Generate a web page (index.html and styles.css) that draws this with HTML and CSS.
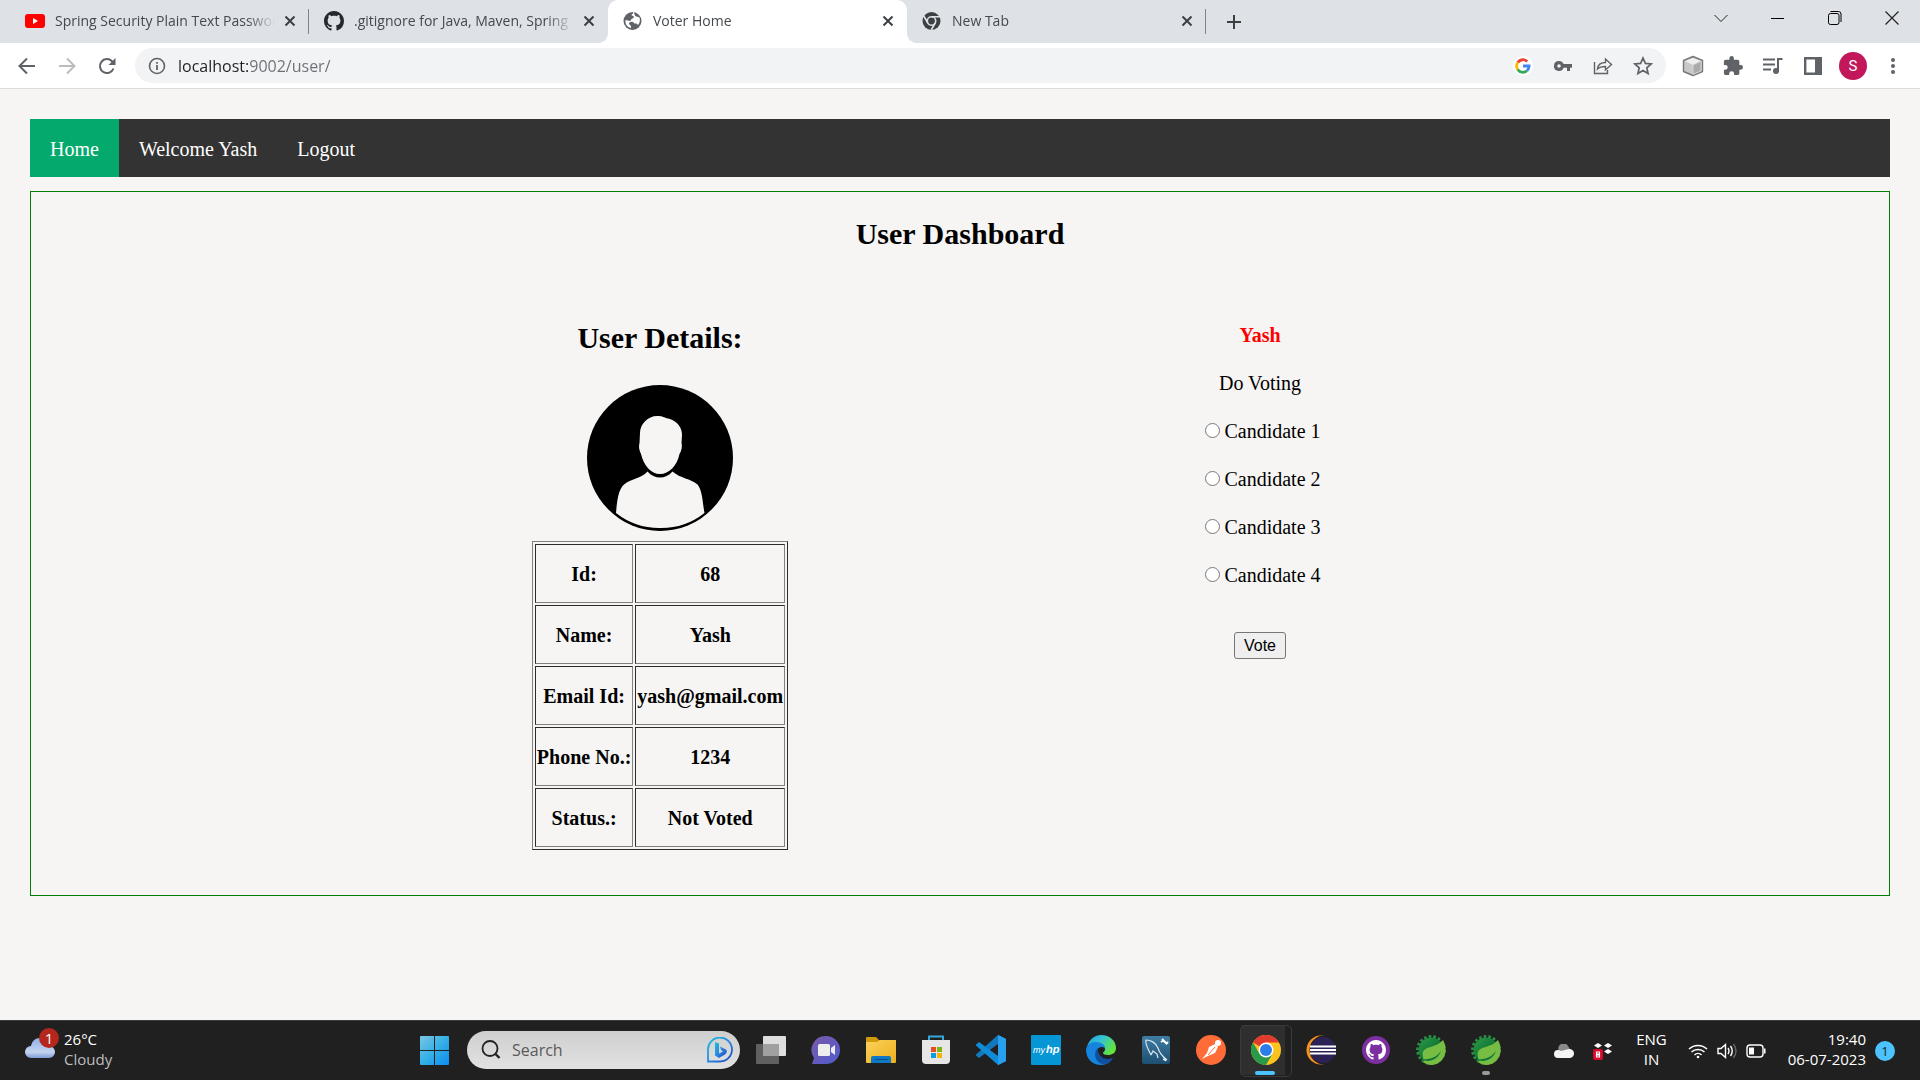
FILE: index.html
```html
<!DOCTYPE html>
<html lang="en">
<head>
<meta charset="utf-8">
<title>Voter Home</title>
<link rel="stylesheet" href="styles.css">
</head>
<body>
<svg class="defs" width="0" height="0" aria-hidden="true">
  <defs>
    <symbol id="close" viewBox="0 0 12 12"><path d="M1.5 1.5l9 9M10.5 1.5l-9 9" stroke="#3c4043" stroke-width="2" fill="none"/></symbol>
    <symbol id="octocat" viewBox="0 0 16 16"><path fill-rule="evenodd" d="M8 0C3.58 0 0 3.58 0 8c0 3.54 2.29 6.53 5.47 7.59.4.07.55-.17.55-.38 0-.19-.01-.82-.01-1.49-2.01.37-2.53-.49-2.69-.94-.09-.23-.48-.94-.82-1.13-.28-.15-.68-.52-.01-.53.63-.01 1.08.58 1.23.82.72 1.21 1.87.87 2.33.66.07-.52.28-.87.51-1.07-1.78-.2-3.64-.89-3.64-3.95 0-.87.31-1.59.82-2.15-.08-.2-.36-1.02.08-2.12 0 0 .67-.21 2.2.82.64-.18 1.32-.27 2-.27s1.36.09 2 .27c1.53-1.04 2.2-.82 2.2-.82.44 1.1.16 1.92.08 2.12.51.56.82 1.27.82 2.15 0 3.07-1.87 3.75-3.65 3.95.29.25.54.73.54 1.48 0 1.07-.01 1.93-.01 2.2 0 .21.15.46.55.38A8.01 8.01 0 0 0 16 8c0-4.42-3.58-8-8-8z"/></symbol>
    <linearGradient id="leafBack" x1="0" y1="0" x2="1" y2="1"><stop offset="0" stop-color="#2e9a47"/><stop offset=".5" stop-color="#137a38"/><stop offset="1" stop-color="#6db33f"/></linearGradient>
    <symbol id="spring" viewBox="0 0 30 30">
      <circle cx="15" cy="15" r="12.5" fill="url(#leafBack)"/>
      <circle cx="15" cy="15" r="13.6" fill="none" stroke="#2a9144" stroke-width="2.6" stroke-dasharray="2.6 2.1" pathLength="84.6"/>
      <path d="M7 22C4 10 20 14 27 5c3 5 4 13 0 18.500C23 30 14 32 7.500 27.500L9 25z" fill="#77bd43"/>
      <path d="M4 24c8 1 17-1 22-10-3 14-14 15-22 10z" fill="#11753a"/>
      <path d="M7 22c7 1 14-1 19-9l1 9c-4 8-12 9-19 5z" fill="#77bd43"/>
      <path d="M4 24c9 1 16-1 21-8-4 10-13 12-21 8z" fill="#11753a"/>
    </symbol>
  </defs>
</svg>

<header class="browser">
  <div class="tabstrip">
    <div class="tabs">
      <div class="tab">
        <svg class="favicon" viewBox="0 0 20 20"><rect y="3" width="20" height="14" rx="3" fill="#f00"/><path d="M8 7l5 3-5 3z" fill="#fff"/></svg>
        <span class="tab-title">Spring Security Plain Text Password</span>
        <button class="tab-close" aria-label="Close tab"><svg width="12" height="12"><use href="#close"/></svg></button>
      </div>
      <div class="tab">
        <svg class="favicon" viewBox="0 0 20 20" fill="#24292f"><use href="#octocat"/></svg>
        <span class="tab-title">.gitignore for Java, Maven, Spring</span>
        <button class="tab-close" aria-label="Close tab"><svg width="12" height="12"><use href="#close"/></svg></button>
      </div>
      <div class="tab active">
        <svg class="favicon" viewBox="0 0 20 20"><circle cx="9.500" cy="10" r="9" fill="#5f6368"/><path d="M10 2.500c-2 1-2 2 0 2.500 1.500.5 1 2-.5 2.500-2 .5-1 2-2.500 2.500l-4.500-1C2 13 4 16 8 17v-2l-2-2c0-2 2-2.500 4-2l1.500 1.500h2l1.500 1.500c2-2 2.300-5 1.500-7.500l-3-1c-2 0-1.500-3-3.500-5z" fill="#fff"/></svg>
        <span class="tab-title">Voter Home</span>
        <button class="tab-close" aria-label="Close tab"><svg width="12" height="12"><use href="#close"/></svg></button>
      </div>
      <div class="tab">
        <svg class="favicon" viewBox="0 0 20 20"><circle cx="9.500" cy="10" r="9" fill="#3c4043"/><circle cx="9.500" cy="10" r="4.200" fill="none" stroke="#dee1e6" stroke-width="1.600"/><path d="M9.500 5.800H18M5.800 12L1.800 5M13.200 12l-4 7" stroke="#dee1e6" stroke-width="1.600"/></svg>
        <span class="tab-title">New Tab</span>
        <button class="tab-close" aria-label="Close tab"><svg width="12" height="12"><use href="#close"/></svg></button>
      </div>
    </div>
    <button class="new-tab" aria-label="New tab"><svg width="16" height="16"><path d="M8 1v14M1 8h14" stroke="#3c4043" stroke-width="2"/></svg></button>
    <div class="window-controls">
      <button aria-label="Search tabs"><svg width="14" height="14"><path d="M.5 4L7 10.500 13.500 4" fill="none" stroke="#222"/></svg></button>
      <button aria-label="Minimize"><svg width="14" height="14"><path d="M0 7.500h13" stroke="#000"/></svg></button>
      <button aria-label="Restore"><svg width="14" height="14" fill="none" stroke="#000"><rect x=".5" y="2.500" width="10.500" height="11" rx="2"/><path d="M2.500.5h8q2.500 0 2.500 2.500v8"/></svg></button>
      <button aria-label="Close"><svg width="14" height="14"><path d="M.5.5l13 13M13.500.5l-13 13" stroke="#222" stroke-width="1.200"/></svg></button>
    </div>
  </div>
  <div class="toolbar">
    <button class="tool" aria-label="Back"><svg width="18" height="18" fill="none" stroke="#5f6368" stroke-width="2"><path d="M17 9H2M9 1.500L1.500 9 9 16.500"/></svg></button>
    <button class="tool" aria-label="Forward"><svg width="18" height="18" fill="none" stroke="#babcbe" stroke-width="2"><path d="M1 9h15M9 1.500L16.500 9 9 16.500"/></svg></button>
    <button class="tool" aria-label="Reload"><svg width="18" height="18"><path d="M15.500 11.500A7 7 0 1 1 14 4.200L16 6.500" fill="none" stroke="#5f6368" stroke-width="2"/><path d="M17.500 1v7h-7z" fill="#5f6368"/></svg></button>
    <div class="omnibox">
      <svg class="info" width="18" height="18"><circle cx="9" cy="9" r="7.500" fill="none" stroke="#5f6368" stroke-width="1.600"/><path d="M9 8v5M9 5v1.800" stroke="#5f6368" stroke-width="1.800"/></svg>
      <input class="url" type="text" value="localhost:9002/user/" aria-label="Address">
      <button class="tool" aria-label="Google"><svg width="20" height="20"><circle cx="10" cy="10" r="10" fill="#fff"/><g fill="none" stroke-width="2.800"><path d="M4.700 6.500A6.300 6.300 0 0 1 14.300 5.500" stroke="#ea4335"/><path d="M4.700 6.500a6.300 6.300 0 0 0 0 7" stroke="#fbbc05"/><path d="M4.700 13.500a6.300 6.300 0 0 0 9.300 1.300" stroke="#34a853"/><path d="M14 14.800A6.300 6.300 0 0 0 16.100 10H10" stroke="#4285f4"/></g></svg></button>
      <button class="tool" aria-label="Passwords"><svg width="18" height="18"><path fill="#5f6368" fill-rule="evenodd" d="M5 4a5 5 0 1 0 4.600 6.800H13V14h3v-3.200h2V7H9.600A5 5 0 0 0 5 4zm0 3.200a1.800 1.800 0 1 1 0 3.600 1.800 1.800 0 0 1 0-3.600z"/></svg></button>
      <button class="tool" aria-label="Share"><svg width="20" height="20" fill="none" stroke="#5f6368" stroke-width="1.400"><path d="M1.500 6v11.500h13V14M4.500 13C5 8 8 6.500 12.500 6.500V3l6 5.500-6 5.500v-3.500c-4 0-6 .5-8 2.500z"/></svg></button>
      <button class="tool" aria-label="Bookmark"><svg width="20" height="20"><path d="M10 2l2.400 5.400 5.800.5-4.400 3.900 1.300 5.700L10 14.500l-5.100 3 1.300-5.700L1.800 7.900l5.800-.5z" fill="none" stroke="#5f6368" stroke-width="1.700"/></svg></button>
    </div>
    <button class="tool" aria-label="Extension"><svg width="22" height="22" stroke="#777" stroke-width="1.400" stroke-linejoin="round"><path d="M11 1.500l9.500 4v11L11 20.500l-9.500-4v-11z" fill="#c8c8c8"/><path d="M3 6l8-3 8 3-8 4z" fill="#eee" stroke="none"/><path d="M11 10l8-4v10l-8 3.500z" fill="#ababab" stroke="#ddd" stroke-width=".8"/></svg></button>
    <button class="tool" aria-label="Extensions"><svg width="20" height="20" viewBox="1 1 22 22"><path fill="#5f6368" d="M20.500 11H19V7c0-1.100-.9-2-2-2h-4V3.500a2.500 2.500 0 0 0-5 0V5H4c-1.100 0-2 .9-2 2v3.800h1.500a2.700 2.700 0 0 1 0 5.400H2V20c0 1.100.9 2 2 2h3.800v-1.500a2.700 2.700 0 0 1 5.400 0V22H17c1.100 0 2-.9 2-2v-4h1.500a2.500 2.500 0 0 0 0-5z"/></svg></button>
    <button class="tool" aria-label="Media"><svg width="20" height="20"><path d="M0 3.500h12M0 8.500h12M0 13.500h8M15 16V3h4.500" fill="none" stroke="#5f6368" stroke-width="2"/><circle cx="13" cy="15" r="3" fill="#5f6368"/></svg></button>
    <button class="tool" aria-label="Side panel"><svg width="18" height="18"><path d="M1.200 1.200h15.600v15.600H1.200z" fill="none" stroke="#5f6368" stroke-width="2.400"/><path d="M11 1h6v16h-6z" fill="#5f6368"/></svg></button>
    <button class="tool" aria-label="Profile"><span class="avatar">S</span></button>
    <button class="tool" aria-label="Menu"><svg width="4" height="18" fill="#5f6368"><circle cx="2" cy="3" r="2"/><circle cx="2" cy="9" r="2"/><circle cx="2" cy="15" r="2"/></svg></button>
  </div>
</header>

<main class="page">
  <nav class="navbar">
    <a class="current" href="#home">Home</a>
    <a href="#welcome">Welcome Yash</a>
    <a href="#logout">Logout</a>
  </nav>
  <section class="dashboard">
    <h2>User Dashboard</h2>
    <div class="columns">
      <div class="details">
        <h2>User Details:</h2>
        <svg class="portrait" width="146" height="146" viewBox="0 0 146 146">
          <circle cx="73" cy="73" r="73"/>
          <path fill="#f6f5f4" d="M70 31c5-.500 8 2 13 3 8 3 12 9 12 16l-.5 8c1 3 0 8-2 11C90 81 82 89 73 89S57 81 54 69c-2-4-2.500-8-1.500-11L53 48c0-9 8-17 17-17z"/>
          <path fill="#f6f5f4" d="M60.500 86.500c7 8 18 8 25 0 8 7 18 7 25 13 5 6 5 18 7 28.500A70 70 0 0 1 73 143a70 70 0 0 1-44-15c1-11 2-23 8-28.500 7-6 17-5.500 23.500-13z"/>
        </svg>
        <table class="facts">
          <tr><th scope="row">Id:</th><td>68</td></tr>
          <tr><th scope="row">Name:</th><td>Yash</td></tr>
          <tr><th scope="row">Email Id:</th><td>yash@gmail.com</td></tr>
          <tr><th scope="row">Phone No.:</th><td>1234</td></tr>
          <tr><th scope="row">Status.:</th><td>Not Voted</td></tr>
        </table>
      </div>
      <form class="ballot">
        <h4>Yash</h4>
        <p>Do Voting</p>
        <label><input type="radio" name="candidate">Candidate 1</label>
        <label><input type="radio" name="candidate">Candidate 2</label>
        <label><input type="radio" name="candidate">Candidate 3</label>
        <label><input type="radio" name="candidate">Candidate 4</label>
        <button type="button" class="vote">Vote</button>
      </form>
    </div>
  </section>
</main>

<footer class="taskbar">
  <div class="weather">
    <div class="cloud">
      <svg width="30" height="20"><defs><linearGradient id="cl" x1="0" y1="0" x2="0" y2="1"><stop offset="0" stop-color="#8fb0ea"/><stop offset=".7" stop-color="#c4d3ee"/><stop offset="1" stop-color="#7f9bd6"/></linearGradient></defs><path d="M6 20a6 6 0 0 1 0-12C7 3 10 0 15 0s8 3 9 8a6 6 0 0 1 0 12z" fill="url(#cl)"/></svg>
      <span class="alert">1</span>
    </div>
    <div class="reading"><span>26°C</span><span class="sky">Cloudy</span></div>
  </div>
  <div class="apps">
    <button class="app" aria-label="Start"><svg width="29" height="29"><defs><linearGradient id="win" x1="0" y1="0" x2="1" y2="1" gradientUnits="objectBoundingBox"><stop offset="0" stop-color="#7cc5e3"/><stop offset=".5" stop-color="#35b0e6"/><stop offset="1" stop-color="#0a8cf0"/></linearGradient></defs><path d="M0 1q0-1 1-1h13v14H0zM15 0h13q1 0 1 1v13H15zM0 15h14v14H1q-1 0-1-1zM15 15h14v13q0 1-1 1H15z" fill="url(#win)"/></svg></button>
    <div class="search">
      <svg width="20" height="20" fill="none" stroke="#222"><circle cx="9" cy="8.500" r="7.500" stroke-width="1.800"/><path d="M14 13.500l4.500 4.500" stroke-width="2.400"/></svg>
      <input type="text" placeholder="Search" aria-label="Search">
      <svg width="26" height="26"><defs><linearGradient id="bing" x1="0" y1="0" x2="1" y2="1"><stop offset="0" stop-color="#19c3d6"/><stop offset=".5" stop-color="#2a86e0"/><stop offset="1" stop-color="#1b49c4"/></linearGradient></defs><path d="M1 24.500V13A12 12 0 1 1 13 24.500z" fill="none" stroke="url(#bing)" stroke-width="1.800"/><path d="M8 5l4 1.500v10l4-2-2-1.500-1-3.500 6 3c1.500 1.500.5 4-1 5l-6 3.500-4-2.500z" fill="url(#bing)"/></svg>
    </div>
    <button class="app" aria-label="Task view"><svg width="30" height="28"><rect x="7" width="23" height="20" rx="1" fill="#dedede"/><rect y="8" width="23" height="20" rx="1" fill="#606060"/><path d="M7 8h16v12H7z" fill="#a0a0a0"/></svg></button>
    <button class="app" aria-label="Chat"><svg width="30" height="30"><defs><linearGradient id="chat" x1="0" y1="0" x2="1" y2="1"><stop offset="0" stop-color="#7b5aa8"/><stop offset="1" stop-color="#4e5bd0"/></linearGradient></defs><path d="M15 1a14 14 0 1 1 0 28H1l2-6A14 14 0 0 1 15 1z" fill="url(#chat)"/><rect x="7" y="9" width="12" height="12" rx="1.500" fill="#eee"/><path d="M20 13l4-3v10l-4-3z" fill="#eee"/></svg></button>
    <button class="app" aria-label="File Explorer"><svg width="30" height="28"><defs><linearGradient id="fold" x1="0" y1="0" x2="1" y2="1"><stop offset="0" stop-color="#fbd15b"/><stop offset="1" stop-color="#edb01c"/></linearGradient></defs><path d="M0 2q0-1 1-1h9l3 3h2v6H0z" fill="#d19a0a"/><path d="M0 6h11l3-2h16v22q0 1-1 1H1q-1 0-1-1z" fill="url(#fold)"/><path d="M5 27v-5q0-2 2-2h16q2 0 2 2v5z" fill="#0f78c5"/><path d="M9 23.500h13" stroke="#084f8c"/></svg></button>
    <button class="app" aria-label="Microsoft Store"><svg width="30" height="30"><path d="M8 7V1.500h14V7" fill="none" stroke="#35a5dc" stroke-width="2"/><path d="M1 5h28v20q0 4-4 4H5q-4 0-4-4z" fill="#e6e6e6"/><path d="M10 12h5v5h-5z" fill="#e94f24"/><path d="M16 12h5v5h-5z" fill="#7fb607"/><path d="M10 18h5v5h-5z" fill="#089ee4"/><path d="M16 18h5v5h-5z" fill="#f5b406"/></svg></button>
    <button class="app" aria-label="Visual Studio Code"><svg width="30" height="30"><path d="M22 0l8 4v22l-8 4z" fill="#26a0ef"/><path d="M22 0v9L3 23l-3-2.500v-1z" fill="#1278be"/><path d="M22 30v-9L3 7 0 9.500v1z" fill="#0f8bd8"/><path d="M22 0v30l8-4V4z" fill="#26a0ef"/></svg></button>
    <button class="app" aria-label="myHP"><svg width="30" height="30"><rect width="30" height="30" rx="1" fill="#0596d5"/><text class="hp" x="2" y="18">my</text><text class="hp bold" x="15" y="18">hp</text></svg></button>
    <button class="app" aria-label="Edge"><svg width="30" height="30"><defs><linearGradient id="e1" x1="0" y1="0" x2="1" y2=".5"><stop offset="0" stop-color="#1f9be0"/><stop offset=".5" stop-color="#36c4d4"/><stop offset="1" stop-color="#62e33c"/></linearGradient></defs><path d="M1 12C3 4 9 0 15 0c9 0 15 6 15 13 0 5-4 7-8 7-3 0-5-1-5-2 0-1 2-1 2-4 0-4-4-6-8-6-4 0-8 2-10 4z" fill="url(#e1)"/><path d="M0 15c0-5 5-8 10-8 5 0 9 3 9 6-6-3-9 2-8 6 1 5 7 9 13 8-3 2-6 3-9 3C7 30 0 24 0 15z" fill="#1683dc"/><path d="M12 13c-1 6 4 11 10 11 2 0 4-1 5-1-2 4-6 6-9 6-8 0-12-11-6-16z" fill="#114f9f"/></svg></button>
    <button class="app" aria-label="MySQL Workbench"><svg width="28" height="28"><defs><linearGradient id="my" x1="0" y1="0" x2="0" y2="1"><stop offset="0" stop-color="#3f7da5"/><stop offset="1" stop-color="#1d4f70"/></linearGradient></defs><rect width="28" height="28" rx="2" fill="url(#my)"/><path d="M9 19l-2-4C5 11 3 7 4 4c5 0 10 3 12 8 1 4 4 8 9 12l-4-1 3 2M9 19l2-4 4 3 1 4" fill="none" stroke="#dbe7ee" stroke-width="1.200"/><path d="M20 3l5 5M19 6l3-2M24 8l2-2" stroke="#fff" stroke-width="2"/></svg></button>
    <button class="app" aria-label="Postman"><svg width="30" height="30"><circle cx="15" cy="15" r="15" fill="#ff6c37"/><circle cx="22" cy="8" r="3" fill="#fff"/><path d="M19 9l3 3-3 6-7 3-6 3 5-6 2-6z" fill="#fff"/><path d="M19 12l-7 8" stroke="#ff6c37"/></svg></button>
    <button class="app running focused" aria-label="Chrome"><svg width="30" height="30"><circle cx="15" cy="15" r="15" fill="#fcc31e"/><path d="M15 15L2 7.500A15 15 0 0 1 28 7.500H15z" fill="#e33b2e"/><path d="M2 7.500A15 15 0 0 0 15 30l6.500-11.200L15 15 8.500 18.800z" fill="#2a9a48"/><circle cx="15" cy="15" r="7.500" fill="#fff"/><circle cx="15" cy="15" r="6" fill="#2b7de9"/></svg></button>
    <button class="app" aria-label="Eclipse"><svg width="30" height="30"><circle cx="15" cy="15" r="14.500" fill="#f7941e"/><circle cx="18" cy="15" r="14.500" fill="#202020"/><circle cx="17" cy="15" r="13" fill="#2c2255"/><path d="M4 11.500h26M4 15h26M4 18.500h26" stroke="#fff" stroke-width="2"/></svg></button>
    <button class="app" aria-label="GitHub Desktop"><svg width="28" height="28" viewBox="0 0 28 28"><circle cx="14" cy="14" r="14" fill="#7c2fa0"/><svg x="4" y="4" width="20" height="20" fill="#fff"><use href="#octocat"/></svg></svg></button>
    <button class="app" aria-label="Spring Tool Suite"><svg width="30" height="30"><use href="#spring"/></svg></button>
    <button class="app running" aria-label="Spring Tool Suite"><svg width="30" height="30"><use href="#spring"/></svg></button>
  </div>
  <div class="tray">
    <svg class="drive" width="20" height="14"><path d="M5 7a5 5 0 0 1 9-5l3 5z" fill="#8a8a8a"/><path d="M4 14a4 4 0 0 1 0-8q2 0 3 1l8-2a4.500 4.500 0 0 1 1 9z" fill="#f4f4f4"/></svg>
    <svg class="box" width="20" height="20"><path d="M5 2l4 2.500L5 7 1 4.500zM15 2l4 2.500L15 7l-4-2.500zM15 8l4 2.500-4 2.500-4-2.500z" fill="#fff"/><rect x="0" y="8" width="10" height="11" rx="2" fill="#d9082b"/><path d="M3.500 11h3v2h-3zM3.500 14h3v2h-3z" fill="none" stroke="#fff" stroke-width="1.200"/></svg>
    <div class="lang"><span>ENG</span><span>IN</span></div>
    <svg class="wifi" width="20" height="16" fill="none" stroke="#fff" stroke-width="1.500"><path d="M1 6a13 13 0 0 1 18 0M3.500 9a9.500 9.500 0 0 1 13 0M6.500 12a5 5 0 0 1 7 0"/><circle cx="10" cy="14" r="1.300" fill="#fff" stroke="none"/></svg>
    <svg width="20" height="16" fill="none" stroke="#fff" stroke-width="1.400"><path d="M1 5.500h3L8.500 1.500v13L4 10.500H1zM11 5q2 3 0 6M13.500 3q3.500 5 0 10"/><path d="M16.500 1q5 7 0 14" stroke="#666"/></svg>
    <svg width="20" height="14"><rect x="1" y="1" width="16" height="12" rx="3" fill="none" stroke="#fff" stroke-width="1.400"/><path d="M3 3.500h5v7H3z" fill="#fff"/><path d="M18 4.500h1.500v5H18z" fill="#fff"/></svg>
    <div class="clock"><span>19:40</span><span>06-07-2023</span></div>
    <span class="count">1</span>
  </div>
</footer>
</body>
</html>
```
FILE: styles.css
```css
* { box-sizing: border-box; }

body {
  margin: 0;
  min-height: 100vh;
  display: flex;
  flex-direction: column;
  background: #f6f5f4;
  font-family: "Liberation Serif", "Times New Roman", serif;
  font-size: 20px;
  line-height: 23px;
  color: #000;
}

.defs { position: absolute; }
svg { display: block; flex: none; }

/* Browser frame */
.browser {
  font-family: "Open Sans", "Noto Sans", sans-serif;
  border-bottom: 1px solid #dadce0;
  background: #fff;
}
.browser button, .taskbar button {
  border: 0;
  padding: 0;
  background: none;
  display: flex;
  align-items: center;
  justify-content: center;
  flex: none;
}
.tabstrip {
  display: flex;
  height: 43px;
  padding-left: 10px;
  background: #dee1e6;
}
.tabs { display: flex; flex: 0 1 1196px; min-width: 0; }
.tab {
  flex: 1 1 0;
  min-width: 0;
  position: relative;
  display: flex;
  align-items: center;
  padding: 0 12px 2px 15px;
  font-size: 14px;
  color: #45494d;
}
.tab::after {
  content: "";
  position: absolute;
  right: 0;
  top: 9px;
  width: 1px;
  height: 25px;
  background: #80848a;
}
.tab:has(+ .active)::after { display: none; }
.favicon { width: 20px; height: 20px; margin-right: 10px; }
.tab-title {
  flex: 1;
  overflow: hidden;
  white-space: nowrap;
  -webkit-mask-image: linear-gradient(to left, transparent, #000 28px);
  mask-image: linear-gradient(to left, transparent, #000 28px);
}
.tab-close { width: 14px; height: 20px; margin-left: 8px; }
.tab.active {
  background: #fff;
  border-radius: 10px 10px 0 0;
}
.tab.active::before, .tab.active::after {
  content: "";
  position: absolute;
  top: auto;
  bottom: 0;
  width: 10px;
  height: 10px;
}
.tab.active::before {
  left: -10px;
  background: radial-gradient(circle at 0 0, transparent 10px, #fff 10px);
}
.tab.active::after {
  right: -10px;
  background: radial-gradient(circle at 100% 0, transparent 10px, #fff 10px);
}
.browser .new-tab { width: 56px; }
.window-controls { display: flex; margin-left: auto; height: 36px; }
.window-controls button { width: 57px; }

.toolbar {
  display: flex;
  align-items: center;
  height: 45px;
  padding: 0 7px;
}
.tool { width: 40px; height: 36px; }
.omnibox {
  flex: 1;
  min-width: 0;
  display: flex;
  align-items: center;
  height: 35px;
  margin: 0 7px 0 8px;
  padding: 0 3px 0 13px;
  border-radius: 18px;
  background: #f1f3f4;
}
.url {
  flex: 1;
  min-width: 0;
  margin-left: 12px;
  padding: 0;
  border: 0;
  outline: 0;
  font: 16px/24px "Open Sans", "Noto Sans", sans-serif;
  color: transparent;
  background: linear-gradient(to right, #202124 72px, #6b7075 72px);
  -webkit-background-clip: text;
  background-clip: text;
}
.avatar {
  width: 28px;
  height: 28px;
  border-radius: 50%;
  background: #c2185b;
  color: #fff;
  font: 15px/28px Roboto, sans-serif;
  text-align: center;
}

/* Page */
.page { flex: 1; padding: 30px; }
.navbar { display: flex; background: #333; }
.navbar a {
  padding: 19px 20px 16px;
  color: #fff;
  text-decoration: none;
}
.navbar .current { background: #04aa6d; }

.dashboard {
  margin-top: 14px;
  padding-bottom: 45px;
  border: 1px solid #008000;
  text-align: center;
}
h2 {
  margin: 25px 0;
  font-size: 30px;
  line-height: 34px;
}
.columns {
  display: grid;
  grid-template-columns: 1fr 1fr;
  max-width: 1200px;
  margin: 45px auto 0;
}
.details { display: flex; flex-direction: column; align-items: center; }
.details h2 { margin: 25px 0 30px; }
.portrait { margin-bottom: 10px; }
.facts {
  border: 1px outset #808080;
  border-spacing: 2px;
  font-weight: bold;
}
.facts th, .facts td {
  height: 59px;
  padding: 2px 1px 0;
  border: 1px inset #808080;
}

.ballot {
  display: flex;
  flex-direction: column;
  align-items: center;
  gap: 25px;
  padding-top: 28px;
}
.ballot h4, .ballot p { margin: 0; font-size: 20px; }
.ballot h4 { color: #f00; }
.ballot input {
  width: 15px;
  height: 15px;
  margin: 0 4px 0 6px;
}
.vote {
  width: 52px;
  height: 27px;
  margin-top: 20px;
  padding: 0;
  border: 1px solid #767676;
  border-radius: 3px;
  background: #efefef;
  font: 16px/23px "Liberation Sans", Arial, sans-serif;
}

/* Taskbar */
.taskbar {
  display: grid;
  grid-template-columns: 1fr auto 1fr;
  height: 60px;
  border-top: 1px solid #3a3d3c;
  background: #202020;
  color: #fff;
  font-family: "Open Sans", "Noto Sans", sans-serif;
  font-size: 15px;
  line-height: 20px;
}
.weather { display: flex; align-items: center; padding-left: 25px; gap: 9px; }
.cloud { position: relative; margin-bottom: 5px; }
.alert {
  position: absolute;
  left: 14px;
  top: -10px;
  width: 20px;
  height: 20px;
  border-radius: 50%;
  background: #b5271c;
  text-align: center;
}
.reading, .lang, .clock {
  display: flex;
  flex-direction: column;
  padding-bottom: 3px;
}
.sky { color: #bdbdbd; }
.apps { display: flex; align-items: center; padding-bottom: 1px; }
.app { position: relative; width: 55px; height: 50px; }
.search {
  display: flex;
  align-items: center;
  width: 273px;
  height: 38px;
  margin: 0 3px 0 5px;
  padding: 0 7px 0 14px;
  border-radius: 19px;
  background: linear-gradient(#cfcfcf, #e2e2e2);
}
.search input {
  flex: 1;
  min-width: 0;
  margin-left: 11px;
  padding: 0;
  border: 0;
  outline: 0;
  background: none;
  font: 16px/24px "Open Sans", "Noto Sans", sans-serif;
}
.search input::placeholder { color: #5a5a5a; }
.hp {
  fill: #fff;
  font-family: "Liberation Sans", sans-serif;
  font-size: 9px;
  font-style: italic;
}
.hp.bold { font-size: 11px; font-weight: bold; }
.running::after {
  content: "";
  position: absolute;
  left: 24px;
  bottom: 0;
  width: 8px;
  height: 4px;
  border-radius: 2px;
  background: #9a9a9a;
}
.taskbar .focused {
  background: linear-gradient(#2f2f2f, #2f2f2f) 3px 0 / 44px 50px no-repeat;
}
.focused::before {
  content: "";
  position: absolute;
  left: 2px;
  top: 0;
  width: 50px;
  height: 50px;
  border: 1px solid #3a3a3a;
  border-radius: 5px;
}
.focused::after { left: 17px; width: 20px; background: #4cc2ff; }

.tray {
  display: flex;
  align-items: center;
  justify-content: flex-end;
  gap: 9px;
  padding-right: 25px;
}
.drive, .box { margin-right: 10px; }
.lang { margin: 0 12px 0 4px; text-align: center; }
.clock { margin-left: 13px; text-align: right; }
.count {
  width: 20px;
  height: 20px;
  border-radius: 50%;
  background: #4cc2ff;
  color: #222;
  font-size: 13px;
  text-align: center;
}
```
